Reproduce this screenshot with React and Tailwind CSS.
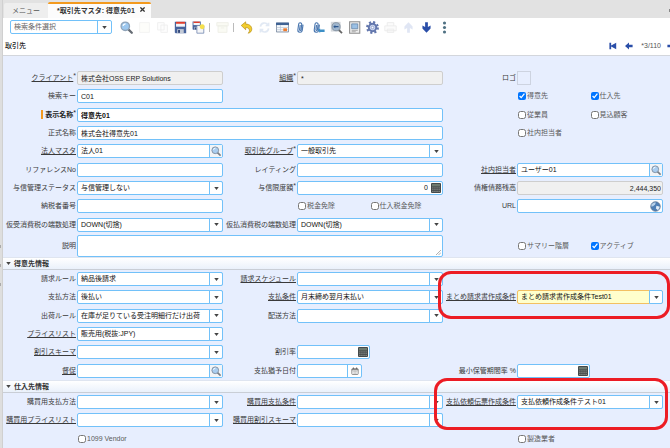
import { useId } from "react";

const BOX = "h-[14px] rounded-[2px] border border-[#72c1f9] bg-white";
const TEXT = "w-full min-w-0 flex-1 bg-transparent px-[3px] text-[7px] leading-[12px] text-[#111] outline-none";

/* ---------- icons ---------- */

function Magnifier({ className = "size-[10px]" }) {
  return (
    <svg viewBox="0 0 16 16" className={className} aria-hidden="true">
      <path d="M10.5 10.5 14.5 14.5" stroke="#7a7f86" strokeWidth="2.6" strokeLinecap="round" />
      <circle cx="6.8" cy="6.8" r="5.4" fill="#a9cdf0" stroke="#8796a8" strokeWidth="1.6" />
      <path d="M4 6.2a3 3 0 0 1 3-2.6" stroke="#fff" strokeWidth="1.4" fill="none" />
    </svg>
  );
}

function Calculator() {
  return (
    <svg viewBox="0 0 10 10" className="size-[10px] shrink-0" aria-hidden="true">
      <rect width="10" height="10" rx="1" fill="#454a4a" />
      <rect x="1" y="1" width="8" height="2.4" fill="#6d7a70" />
      {[4.4, 6.2, 8].map((y) =>
        [1.2, 3.3, 5.4, 7.5].map((x) => <rect key={`${x}-${y}`} x={x} y={y} width="1.3" height="1" fill="#8d9290" />)
      )}
    </svg>
  );
}

function Calendar() {
  return (
    <svg viewBox="0 0 10 10" className="size-[8px]" aria-hidden="true">
      <rect x="1" y="2" width="8" height="7.4" rx="1" fill="#fff" stroke="#777" />
      <path d="M1 3.4h8M3 .6v2M7 .6v2" stroke="#666" strokeWidth="1.3" />
      <path d="M2 5.6h6M2 7.6h6M4 4v5M6 4v5" stroke="#aaa" strokeWidth=".6" />
    </svg>
  );
}

function Globe() {
  return (
    <svg viewBox="0 0 12 12" className="size-[11px]" aria-hidden="true">
      <circle cx="6" cy="6" r="5.2" fill="#4f7fb5" stroke="#5a6f88" strokeWidth=".8" />
      <path d="M2 3.6C3 2 5 1.4 6.4 1.6L5.6 3.8 3.4 5.8 1.2 6Z" fill="#b9d2ea" />
      <path d="M7 5.2 10.8 6.4 8.8 10 6.4 8.2Z" fill="#e4eef8" />
    </svg>
  );
}

function Down() {
  return (
    <svg viewBox="0 0 6 4" className="h-[3px] w-[5px]" aria-hidden="true">
      <path d="M0 0h6L3 4Z" fill="#444" />
    </svg>
  );
}

function Floppy() {
  return (
    <>
      <path d="M1 1h14v14H2L1 14Z" fill="#47639c" />
      <path d="M2.5 1h11v6h-11Z" fill="#f4f5f8" />
      <path d="M2.5 1h11v2.4h-11Z" fill="#e03d2c" />
      <path d="M4 10h8v5H4Z" fill="#c3cad6" />
      <path d="M5 11h2.4v3.6H5Z" fill="#34497a" />
    </>
  );
}

function Clip() {
  return (
    <path
      d="M10.6 4v7.2a2.7 2.7 0 0 1-5.4 0V4.2a1.9 1.9 0 0 1 3.8 0v6.6a.9.9 0 0 1-1.8 0V5"
      transform="rotate(8 8 8)"
      fill="none"
      stroke="#4c78b0"
      strokeWidth="1.4"
    />
  );
}

const arrowDown = "M6.3 1.5h3.4v6l3.3-2v3.6L8 14.5 3 9.1V5.5l3.3 2Z";

const TOOLS = [
  { name: "検索", art: <><path d="M10 10 14.5 14.5" stroke="#666c74" strokeWidth="2.8" strokeLinecap="round" /><circle cx="6.5" cy="6.5" r="5.2" fill="#9dc8ef" stroke="#8fa3b8" strokeWidth="1.6" /><path d="M3.8 6a3 3 0 0 1 3-2.5" stroke="#fff" strokeWidth="1.5" fill="none" /></> },
  { name: "新規", faint: true, art: <path d="M2 2h12v12H2Z" fill="#fafae8" stroke="#bbb" /> },
  { name: "コピー", faint: true, art: <path d="M2 2h8v9H2ZM6 5h8v9H6Z" fill="#f7f7f7" stroke="#aaa" /> },
  { name: "保存", art: <Floppy /> },
  { name: "保存して新規", art: <><g transform="scale(.72)"><Floppy /></g><path d="M6 5.5h8.5V15H6Z" fill="#f5f6f8" stroke="#667da8" strokeWidth=".9" /><circle cx="12.5" cy="7" r="3" fill="#f5e04c" /></> },
  { divider: true },
  { name: "削除", faint: true, art: <path d="M1 2h14v4H1ZM2.5 6h11v8h-11ZM6 8.5h4" fill="#e9ecc9" stroke="#a9ad86" /> },
  { divider: true },
  { name: "元に戻す", art: <path d="M1.5 5.5 7 1v2.8c5 0 7.5 3 7.5 6.2 0 2.5-1.8 4.6-4.5 5 1.5-1.5 2-3 1.3-4.6C10.6 8.7 9.2 8 7 8v2.8Z" fill="#f2cd2e" stroke="#b48a12" strokeWidth=".8" /> },
  { name: "更新", faint: true, art: <path d="M3 7a5 5 0 0 1 9-2.5M13 2v3.5H9.5M13 9a5 5 0 0 1-9 2.5M3 14v-3.5h3.5" fill="none" stroke="#6f93c9" strokeWidth="2" /> },
  { name: "グリッド切替", art: <><path d="M.5 2.5h15v11H.5Z" fill="#f7f9fb" stroke="#6d7f96" /><path d="M0 2h16v3H0Z" fill="#3f6293" /><path d="M1 8h14M1 10.7h14M5.5 5v8" stroke="#b6c2d2" strokeWidth=".8" /><path d="M9 9h4.5v3.5H9Z" fill="#ee7b2d" /></> },
  { name: "添付", art: <Clip /> },
  { name: "添付一覧", art: <><g transform="translate(-2 0)"><Clip /></g><path d="M7.5 11 10 9v1.5h5.5v3H10V15Z" fill="#3d8fc6" /></> },
  { name: "ズーム", art: <><path d="M1 1h12v12H1Z" fill="#d3d7dc" /><path d="M10.5 10.5 14.8 14.8" stroke="#666" strokeWidth="2.2" /><circle cx="7.5" cy="7" r="5" fill="#9fb6ce" stroke="#8996a3" strokeWidth="1.2" /><path d="m4 7 2.5-2v1.3h4v1.4h-4V9Z" fill="#2b568e" /></> },
  { name: "レポート", art: <><path d="M2 1h12.5v14H2Z" fill="#eee" stroke="#8d8d8d" strokeWidth="1.3" /><path d="M4.5 3.5h7.5v6H4.5Z" fill="#9bc0e4" stroke="#54779d" strokeWidth=".8" /><path d="M4.5 11.5h7.5M4.5 13.2h5" stroke="#888" strokeWidth=".8" /></> },
  { name: "プロセス", art: <><circle cx="8" cy="8" r="6.5" fill="none" stroke="#6377ad" strokeWidth="2.8" strokeDasharray="2.55 2.55" /><circle cx="8" cy="8" r="4.6" fill="#cdd8f0" stroke="#6377ad" strokeWidth="2.4" /><circle cx="8" cy="8" r="1.6" fill="#fff" stroke="#8b9bc8" /></> },
  { name: "印刷", faint: true, art: <path d="M4 6V2h8v4M1 6h14v6H1ZM4 10h8v4H4Z" fill="#eee" stroke="#999" /> },
  { name: "親レコード", faint: true, art: <path d={arrowDown} transform="rotate(180 8 8)" fill="#6a85cc" /> },
  { name: "詳細レコード", art: <path d={arrowDown} fill="#2a4ea8" /> },
  { name: "その他", art: <g fill="#4f7183"><circle cx="8" cy="2.5" r="1.9" /><circle cx="8" cy="8" r="1.9" /><circle cx="8" cy="13.5" r="1.9" /></g> },
];

/* ---------- form parts ---------- */

function Label({ id, children, link, required, bold }) {
  return (
    <label
      htmlFor={id}
      className={`flex w-[74px] shrink-0 justify-end whitespace-nowrap pr-px text-[7px] leading-[10px] ${bold ? "font-bold text-[#222]" : "text-[#3a3a3a]"}`}
    >
      {bold && <span className="mr-[2px] h-[9px] w-[2px] bg-[#f39a1e]" />}
      {link ? <a href="#" className="underline underline-offset-1">{children}</a> : children}
      {required && <span className="-mt-[2px] font-normal">*</span>}
    </label>
  );
}

function Field({ label, link, required, bold, kind = "text", value = "", span, mark }) {
  const id = useId();
  return (
    <div className={`flex min-w-0 items-center ${span ? "col-span-2" : ""}`}>
      <Label id={id} link={link} required={required} bold={bold}>{label}</Label>
      {kind === "text" && (
        <input id={id} defaultValue={value} className={`${BOX} ${TEXT} ${bold ? "font-bold" : ""}`} />
      )}
      {kind === "readonly" && (
        <input id={id} readOnly value={value} className="h-[14px] w-full min-w-0 flex-1 rounded-[2px] border border-[#cecece] bg-[#f0f0f0] px-[3px] text-[7px] leading-[12px] text-[#222] outline-none" />
      )}
      {kind === "balance" && (
        <input id={id} readOnly value={value} className="h-[14px] w-full min-w-0 flex-1 rounded-[2px] border border-[#cecece] bg-[#f0f0f0] px-px text-right text-[7px] leading-[12px] text-[#222] outline-none" />
      )}
      {kind === "select" && (
        <div className={`relative flex h-[14px] min-w-0 flex-1 rounded-[2px] border ${mark ? "border-[#f3c062] bg-[#ffffcc]" : "border-[#72c1f9] bg-white"}`}>
          <select id={id} defaultValue={value} className={`${TEXT} appearance-none`}>
            <option>{value}</option>
          </select>
          <span className="pointer-events-none absolute -inset-y-px -right-px flex w-[14px] items-center justify-center rounded-r-[2px] border border-[#72c1f9] bg-white">
            <Down />
          </span>
        </div>
      )}
      {kind === "lookup" && (
        <div className={`${BOX} flex min-w-0 flex-1`}>
          <input id={id} defaultValue={value} className={TEXT} />
          <button aria-label={`${label}を検索`} className="flex w-[13px] items-center justify-center border-l border-[#72c1f9] bg-[#f1f4f7]">
            <Magnifier />
          </button>
        </div>
      )}
      {kind === "url" && (
        <div className={`${BOX} flex min-w-0 flex-1`}>
          <input id={id} defaultValue={value} className={TEXT} />
          <button aria-label="URLを開く" className="flex w-[13px] items-center justify-center"><Globe /></button>
        </div>
      )}
      {(kind === "number" || kind === "shortNumber") && (
        <div className={`${BOX} flex min-w-0 items-center ${kind === "number" ? "flex-1" : "w-[73px]"}`}>
          <input id={id} defaultValue={value} className={`${TEXT} text-right`} />
          <button aria-label="電卓" className="pr-px"><Calculator /></button>
        </div>
      )}
      {kind === "date" && (
        <div className={`${BOX} flex w-[65px] min-w-0`}>
          <input id={id} defaultValue={value} className={TEXT} />
          <button aria-label="カレンダー" className="flex w-[14px] items-center justify-center border-l border-[#72c1f9]"><Calendar /></button>
        </div>
      )}
    </div>
  );
}

function Checks({ items }) {
  return (
    <div className="flex min-w-0 items-center pl-[75px]">
      {items.map(([text, on]) => (
        <label key={text} className="flex flex-1 items-center gap-px whitespace-nowrap text-[7px] leading-[10px] text-[#5a5a5a]">
          <input type="checkbox" defaultChecked={on} className="size-[8px]" />
          {text}
        </label>
      ))}
    </div>
  );
}

function SectionTitle({ children }) {
  return (
    <button className="flex h-[13px] w-full items-center gap-[3px] border-y border-b-[#c9ced6] border-t-[#dfe5f0] bg-linear-to-b from-white to-[#eaf1fb] pl-[3px] text-[7px] leading-[10px] font-bold text-[#333]">
      <Down />
      {children}
    </button>
  );
}

const Gap = () => <div />;

function Ring({ className }) {
  return <div className={`pointer-events-none absolute rounded-[13px] border-[3px] border-[#ec1c24] ${className}`} />;
}

function NavArrow({ first, flip }) {
  return (
    <svg viewBox="0 0 10 10" className={`size-[8px] ${flip ? "rotate-180" : ""}`} aria-hidden="true">
      {first ? <path d="M.5 1h2.2v3.5L9 1v8L2.7 5.5V9H.5Z" fill="#2a4ea8" /> : <path d="M0 5 5 .5v2.8h4.5v3.4H5v2.8Z" fill="#2a4ea8" />}
    </svg>
  );
}

/* ---------- page ---------- */

export default function App() {
  return (
    <div className="flex min-h-screen overflow-hidden bg-[#e7eefe] font-['Liberation_Sans','Noto_Sans_CJK_JP',sans-serif] text-[7px]">
      <aside className="flex w-[3px] shrink-0 flex-col gap-[16px] border-r border-[#d0d0d0] bg-[#dedede] pt-[245px]">
        <span className="h-[3px] w-px bg-[#aaa]" />
        <span className="h-[3px] w-px bg-[#aaa]" />
        <span className="h-[3px] w-px bg-[#aaa]" />
      </aside>
      <main className="min-w-0 flex-1">
        <nav className="flex h-[18px] items-end bg-[#e2e2e2] pl-px leading-[10px]">
          <button className="flex h-[15px] w-[44px] items-center rounded-t-[2px] bg-[#eeeeee] pl-[8px] text-[#555]">メニュー</button>
          <div className="flex h-[16px] items-center rounded-t-[2px] border-t-2 border-[#f39a1e] bg-[#fcfcfc] pr-[6px] pl-[9px] font-bold text-[#333]">
            <button>*取引先マスタ: 得意先01</button>
            <button aria-label="閉じる" className="mb-[4px] ml-[5px]">
              <svg viewBox="0 0 6 6" className="size-[5px]"><path d="m.5.5 5 5m0-5-5 5" stroke="#333" strokeWidth="1.5" /></svg>
            </button>
          </div>
          <span className="mb-[6px] ml-auto h-[3px] w-px bg-[#888]" />
        </nav>

        <header className="border-b border-[#d3d6dc] bg-white">
          <div className="flex h-[18px] items-center pl-[7px]">
            <div className={`${BOX} relative mr-[5px] flex w-[102px]`}>
              <select aria-label="検索条件選択" className={`${TEXT} appearance-none text-[#666]!`}>
                <option>検索条件選択</option>
              </select>
              <span className="pointer-events-none absolute inset-y-0 right-0 flex w-[14px] items-center justify-center border-l border-[#72c1f9]"><Down /></span>
            </div>
            {TOOLS.map((t, i) =>
              t.divider ? (
                <span key={i} className="mr-[3px] ml-[2px] h-[9px] w-px bg-[#bbb]" />
              ) : (
                <button key={i} aria-label={t.name} className={`flex w-[18px] justify-center ${t.faint ? "opacity-20" : ""}`}>
                  <svg viewBox="0 0 16 16" className="size-[13px]" aria-hidden="true">{t.art}</svg>
                </button>
              )
            )}
          </div>
          <div className="flex h-[19px] items-center pl-[2px] leading-[10px]">
            <span className="font-medium text-[#222]">取引先</span>
            <div className="-mr-[5px] ml-auto flex items-center gap-[8px] text-[#555]">
              <button aria-label="最初"><NavArrow first /></button>
              <button aria-label="前へ"><NavArrow /></button>
              <span>*3/110</span>
              <button aria-label="次へ" className="-ml-[2px]"><NavArrow flip /></button>
            </div>
          </div>
        </header>

        <section className="pt-[13px] pr-[7px]">
          <div className="grid h-[165px] grid-cols-3 grid-rows-9">
            <Field label="クライアント" link required kind="readonly" value="株式会社OSS ERP Solutions" />
            <Field label="組織" link required kind="readonly" value="*" />
            <div className="flex items-center">
              <span className="w-[74px] pr-px text-right leading-[10px] text-[#3a3a3a]">ロゴ</span>
              <button aria-label="ロゴ" className="size-[14px] border border-[#cdd3e0]" />
            </div>

            <Field label="検索キー" value="C01" />
            <Gap />
            <Checks items={[["得意先", true], ["仕入先", true]]} />

            <Field label="表示名称" bold required span value="得意先01" />
            <Checks items={[["従業員", false], ["見込顧客", false]]} />

            <Field label="正式名称" span value="株式会社得意先01" />
            <Checks items={[["社内担当者", false]]} />

            <Field label="法人マスタ" link kind="lookup" value="法人01" />
            <Field label="取引先グループ" link required kind="select" value="一般取引先" />
            <Gap />

            <Field label="リファレンスNo" />
            <Field label="レイティング" />
            <Field label="社内担当者" link kind="lookup" value="ユーザー01" />

            <Field label="与信管理ステータス" kind="select" value="与信管理しない" />
            <Field label="与信限度額" required kind="number" value="0" />
            <Field label="債権債務残高" kind="balance" value="2,444,350" />

            <Field label="納税者番号" />
            <Checks items={[["税金免除", false], ["仕入税金免除", false]]} />
            <Field label="URL" kind="url" />

            <Field label="仮受消費税の端数処理" kind="select" value="DOWN(切捨)" />
            <Field label="仮払消費税の端数処理" kind="select" value="DOWN(切捨)" />
            <Gap />
          </div>
          <div className="grid h-[23px] grid-cols-3">
            <div className="col-span-2 flex items-center">
              <Label id="description">説明</Label>
              <div className="relative flex h-[22px] min-w-0 flex-1">
                <textarea id="description" className="min-w-0 flex-1 resize-none rounded-[2px] border border-[#72c1f9] bg-white px-[3px] outline-none" />
                <svg viewBox="0 0 6 6" className="pointer-events-none absolute right-[2px] bottom-[2px] size-[5px]" aria-hidden="true">
                  <path d="M0 6 6 0M3 6 6 3" stroke="#888" strokeWidth=".8" />
                </svg>
              </div>
            </div>
            <Checks items={[["サマリー階層", false], ["アクティブ", true]]} />
          </div>
        </section>

        <section className="relative">
          <SectionTitle>得意先情報</SectionTitle>
          <div className="grid h-[110px] grid-cols-3 grid-rows-6 pr-[7px]">
            <Field label="請求ルール" kind="select" value="納品後請求" />
            <Field label="請求スケジュール" link kind="select" />
            <Gap />

            <Field label="支払方法" kind="select" value="後払い" />
            <Field label="支払条件" link kind="select" value="月末締め翌月末払い" />
            <Field label="まとめ請求書作成条件" link kind="select" mark value="まとめ請求書作成条件Test01" />

            <Field label="出荷ルール" kind="select" value="在庫が足りている受注明細行だけ出荷" />
            <Field label="配送方法" kind="select" />
            <Gap />

            <Field label="プライスリスト" link kind="select" value="販売用(税抜:JPY)" />
            <Gap />
            <Gap />

            <Field label="割引スキーマ" link kind="select" />
            <Field label="割引率" kind="shortNumber" />
            <Gap />

            <Field label="督促" link kind="lookup" />
            <Field label="支払猶予日付" kind="date" />
            <Field label="最小保管期間率 %" kind="shortNumber" />
          </div>
          <Ring className="top-[14px] right-0 h-[48px] w-[232px]" />
        </section>

        <section className="relative">
          <SectionTitle>仕入先情報</SectionTitle>
          <div className="grid h-[55px] grid-cols-3 grid-rows-3 pr-[7px]">
            <Field label="購買用支払方法" kind="select" />
            <Field label="購買用支払条件" link kind="select" />
            <Field label="支払依頼伝票作成条件" link kind="select" value="支払依頼作成条件テスト01" />

            <Field label="購買用プライスリスト" link kind="select" />
            <Field label="購買用割引スキーマ" link kind="select" />
            <Gap />

            <Checks items={[["1099 Vendor", false]]} />
            <Gap />
            <Checks items={[["製造業者", false]]} />
          </div>
          <Ring className="-top-[2px] right-[2px] h-[52px] w-[234px]" />
        </section>
      </main>
    </div>
  );
}
